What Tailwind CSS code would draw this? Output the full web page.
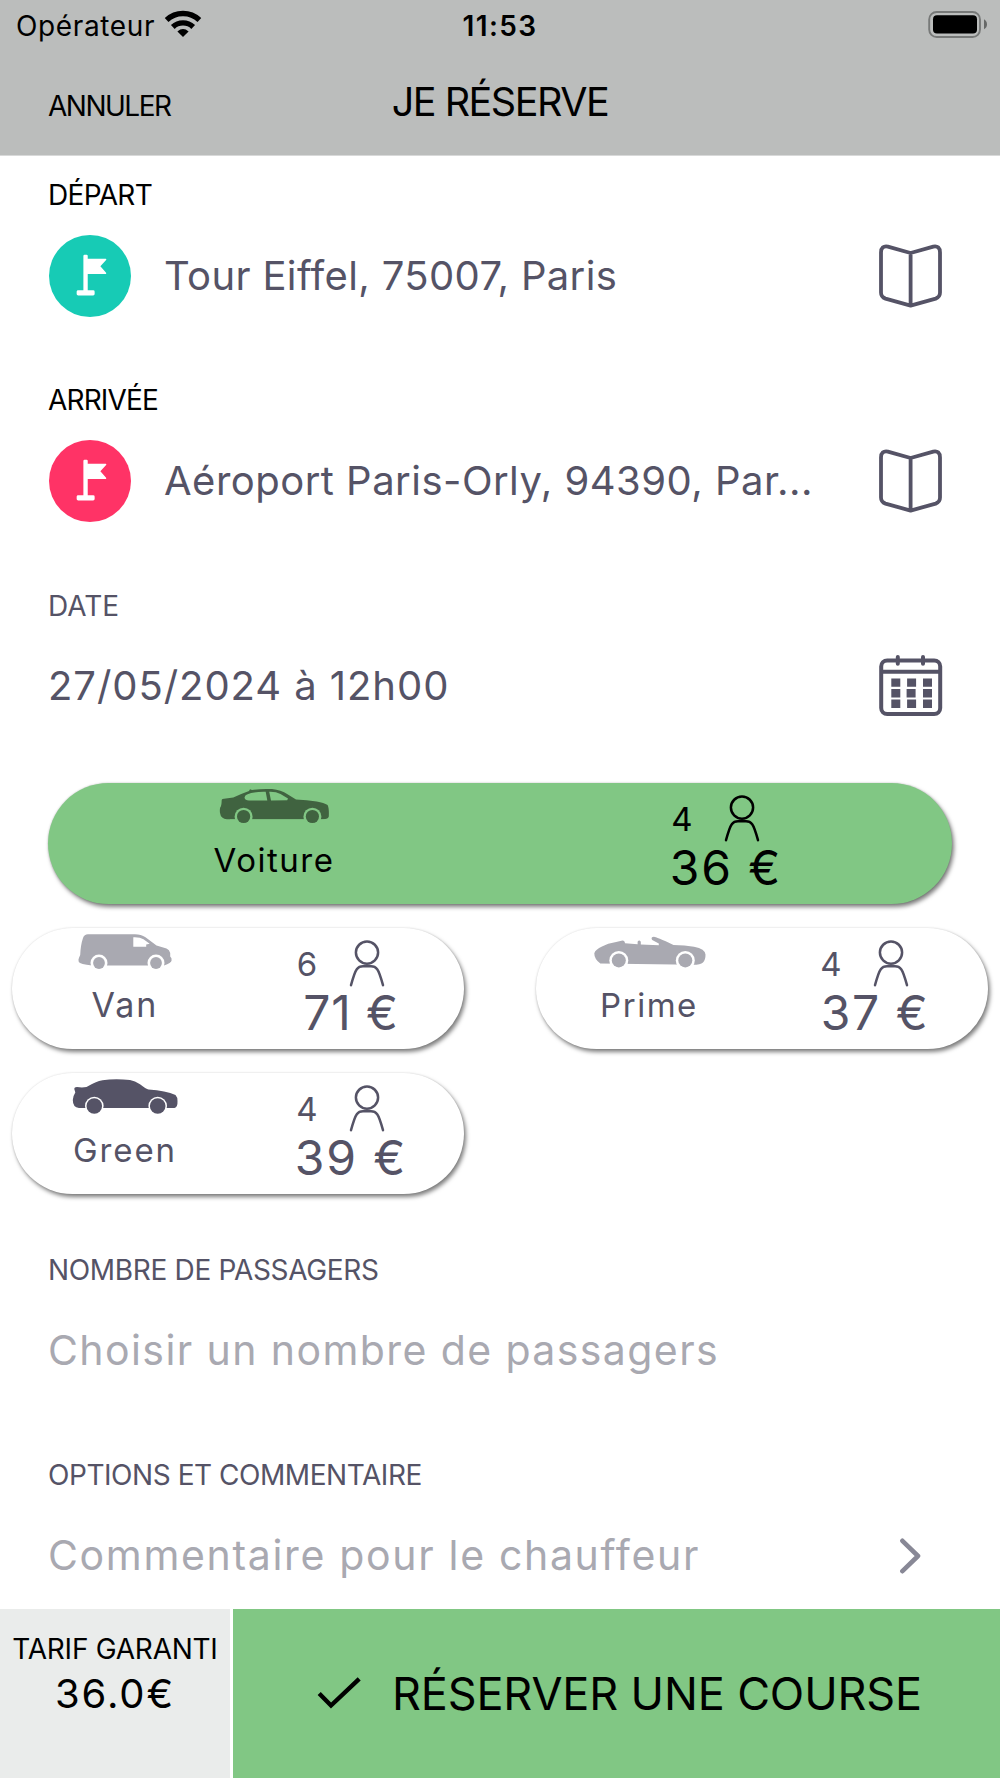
<!DOCTYPE html>
<html lang="fr">
<head>
<meta charset="utf-8">
<title>Je réserve</title>
<script src="https://cdn.jsdelivr.net/npm/@tailwindcss/browser@4"></script>
</head>
<body class="bg-white">
<svg class="hidden">
  <symbol id="flag" viewBox="0 0 83 83">
    <rect x="34.8" y="20" width="4.4" height="38" rx="1.2"/>
    <rect x="28" y="56" width="18.2" height="5.2" rx="1.5"/>
    <path d="M38.5 24H57.4Q58.6 24.2 57.8 25.2L52 31.6L57.8 38.2Q58.4 39.3 57.4 39.4H38.5Z"/>
  </symbol>
  <symbol id="book" viewBox="0 0 64 64">
    <path d="M31.6 9L8.9 2.6Q2 1.4 2 8.5V48.5Q2 53 6.5 54.6L31.6 61.6L56.7 54.6Q61 53 61 48.5V8.5Q61 1.4 54.3 2.6ZM31.6 9V61" fill="none" stroke="currentColor" stroke-width="3.8" stroke-linejoin="round"/>
  </symbol>
  <symbol id="person" viewBox="0 0 36 48">
    <g fill="none" stroke="currentColor" stroke-width="2.5" stroke-linecap="round">
      <circle cx="18" cy="13.6" r="11.1"/>
      <path d="M2 46.2C4.6 36.6 6 32.6 7.8 30.2Q10 27.3 14 27.3H22Q26 27.3 28.2 30.2C30 32.6 31.4 36.6 34 46.2"/>
    </g>
  </symbol>
</svg>

<div class="flex h-[1778px] w-[1000px] flex-col overflow-hidden bg-white font-['Inter',sans-serif] text-[#555366]">

  <header class="h-[156px] shrink-0 border-b border-[#d8d9d9] bg-[#bbbdbc] text-black">
    <div class="grid h-[52px] grid-cols-3 items-start text-[28px] leading-[52px]">
      <div class="flex pl-4">
        <span class="w-[139px] tracking-[0.64px]">Opérateur</span>
        <svg class="ml-[9px] mt-[9px] h-[29px] w-[38px]" viewBox="0 0 38 29" fill="none" stroke="#000" stroke-width="5.4">
          <path d="M2.6 11A24 24 0 0 1 35.4 11M8.8 18A14.8 14.8 0 0 1 29.2 18"/>
          <path d="M19 28L13.4 22.4Q19 17.6 24.6 22.4Z" fill="#000" stroke="none"/>
        </svg>
      </div>
      <span class="text-center font-semibold tracking-[1.4px]">11:53</span>
      <svg class="mt-[10px] mr-[12px] h-[29px] w-[61px] justify-self-end" viewBox="0 0 61 29">
        <rect x="2.2" y="2" width="50.8" height="25" rx="7.5" fill="none" stroke="#777978" stroke-width="1.9"/>
        <rect x="6" y="5.2" width="44" height="18.2" rx="4" fill="#000"/>
        <path d="M57 9.2Q60 11 60 14.3T57 19.3Z" fill="#666867"/>
      </svg>
    </div>
    <div class="grid grid-cols-[300px_400px_300px] items-start">
      <span class="pl-12 text-[28px] leading-[109px] tracking-[-1.5px]">ANNULER</span>
      <span class="text-center text-[39.5px] leading-[101px] tracking-[-1.5px]">JE RÉSERVE</span>
    </div>
  </header>

  <main class="h-[1453px] shrink-0 overflow-hidden">
    <section class="h-[204px] pt-[19px] pl-12">
      <div class="text-[28px] leading-[40px] tracking-[-0.7px] text-black">DÉPART</div>
      <div class="mt-[19px] flex h-[83px] items-center pr-[57px]">
        <svg class="ml-px size-[82px] rounded-full bg-[#17cbb5] fill-white"><use href="#flag"/></svg>
        <span class="ml-[33px] flex-1 text-[40px] leading-none tracking-[0.36px] whitespace-nowrap">Tour Eiffel, 75007, Paris</span>
        <svg class="size-16"><use href="#book"/></svg>
      </div>
    </section>

    <section class="h-[206px] pt-[20px] pl-12">
      <div class="text-[28px] leading-[40px] tracking-[-0.85px] text-black">ARRIVÉE</div>
      <div class="mt-[19px] flex h-[83px] items-center pr-[57px]">
        <svg class="ml-px size-[82px] rounded-full bg-[#ff3366] fill-white"><use href="#flag"/></svg>
        <span class="ml-[33px] flex-1 text-[40px] leading-none tracking-[0.48px] whitespace-nowrap">Aéroport Paris-Orly, 94390, Par...</span>
        <svg class="size-16"><use href="#book"/></svg>
      </div>
    </section>

    <section class="h-[205px] pt-[20px] pl-12">
      <div class="text-[28px] leading-[40px]">DATE</div>
      <div class="mt-[18px] flex h-[83px] items-center pr-[57px]">
        <span class="flex-1 text-[40px] leading-none tracking-[0.94px]">27/05/2024 à 12h00</span>
        <svg class="size-16" viewBox="0 0 64 64" fill="none" stroke="currentColor" stroke-width="4">
          <rect x="2.2" y="6.5" width="59" height="53.5" rx="6"/>
          <path d="M2 17.8H61"/>
          <path d="M18.8 3V9.8M44 3V9.8" stroke-linecap="round"/>
          <path d="M12.3 28.6h9m6.8 0h9m6.9 0h9M12.3 39.2h9m6.3 0h9m7.4 0h9M12.3 49.8h9m6.8 0h9m6.9 0h9" stroke-width="8.4"/>
        </svg>
      </div>
    </section>

    <div class="mt-3 grid grid-cols-[452px_452px] gap-x-[72px] gap-y-6 px-3">
      <div class="col-span-2 mx-9 grid h-[121px] grid-cols-2 rounded-full bg-[#81c784] text-black shadow-[2px_3px_4px_rgba(0,0,0,0.5),0_0_2px_rgba(0,0,0,0.2)]">
        <div class="flex flex-col items-center">
          <svg class="h-[54px] w-[120px]" viewBox="0 0 120 54" fill="#406340">
            <path d="M7.7 17Q8 15.8 10 15.8L19.3 14.5Q28 10.5 35 8L36 6.3L38 7Q47 5.6 58 6.1Q67 7 73.5 11.2L82 16.4Q93 17 102.7 18.6Q110 20 113.6 22Q115.2 25 114.8 33.5Q114.5 36 109 36.3H13Q6.8 35.6 6.3 31Q5.4 28 6.2 24.5Q7.6 23 7.7 17Z"/>
            <path d="M30.6 15Q30.3 12.5 33 11.4Q40 8.5 51.7 8.8L53.3 17.4H35Q31 17.2 30.6 15ZM55.2 8.8Q62 8.6 66.5 11L74 15.4L73.2 17.3L57 17.6Z" fill="#81c784"/>
            <g fill="#81c784"><circle cx="29.6" cy="33.7" r="9"/><circle cx="98.4" cy="33.7" r="9"/><rect x="16" y="36.5" width="98" height="10"/></g>
            <circle cx="29.6" cy="33.5" r="6.6"/><circle cx="98.4" cy="33.5" r="6.6"/>
          </svg>
          <span class="text-[33px] leading-[46px] tracking-[1.5px]">Voiture</span>
        </div>
        <div class="flex flex-col items-center pt-[11px]">
          <div class="flex h-12 gap-[31px] pr-[21px]">
            <span class="w-[22px] text-center text-[33px] leading-[51px]">4</span>
            <svg class="h-12 w-9"><use href="#person"/></svg>
          </div>
          <span class="text-[48px] leading-[51px] tracking-[1.9px]">36 €</span>
        </div>
      </div>

      <div class="grid h-[121px] grid-cols-2 rounded-full bg-white shadow-[2px_3px_4px_rgba(0,0,0,0.5),0_0_2px_rgba(0,0,0,0.12)]">
        <div class="flex flex-col items-center">
          <svg class="h-[54px] w-[120px]" viewBox="0 0 120 54" fill="#a9a9b1">
            <path d="M18 10Q19.3 6.3 23 6.3H70Q76 6.3 80.5 9.3L91.5 17.6L101.5 20.6Q104.5 21.8 105.2 25V28.5Q107 30 106.6 32.5Q106.3 35 99 37.5H27Q15 36.4 13.8 34Q13 31.5 14 29.8L15.2 27Q15.6 17 18 10Z"/>
            <path d="M68.3 9.3Q75 9 78.5 11.3L84.7 15.8L81.2 16.6V18.7H68.3Z" fill="#fff"/>
            <g fill="#fff"><circle cx="34" cy="35" r="8.5"/><circle cx="91" cy="35" r="8.5"/></g>
            <circle cx="34" cy="35" r="5.9"/><circle cx="91" cy="35" r="5.9"/>
          </svg>
          <span class="text-[34px] leading-[46px] tracking-[2px]">Van</span>
        </div>
        <div class="flex flex-col items-center pt-[11px]">
          <div class="flex h-12 gap-[31px] pr-[21px]">
            <span class="w-[22px] text-center text-[33px] leading-[51px]">6</span>
            <svg class="h-12 w-9"><use href="#person"/></svg>
          </div>
          <span class="text-[48px] leading-[51px] tracking-[0.8px]">71 €</span>
        </div>
      </div>

      <div class="grid h-[121px] grid-cols-2 rounded-full bg-white shadow-[2px_3px_4px_rgba(0,0,0,0.5),0_0_2px_rgba(0,0,0,0.12)]">
        <div class="flex flex-col items-center">
          <svg class="h-[54px] w-[120px]" viewBox="0 0 120 54" fill="#a9a9b1">
            <path d="M5.3 25.3Q6.5 21.5 13 18.6Q19 15.2 26 14.2L33.5 12.4Q35.8 12.4 36 15.3L48.6 16.2V13.8Q50.2 11.2 51.8 13.8V16.5L69.8 17.3V15.4L63.2 12Q61.3 9 65 8.7Q67 8.7 84.5 16.9Q96 17.2 105 18.7Q116.3 21 116.5 26.5Q116.6 32 114 34.5Q111.5 36.8 104 36.8L11.3 35.6Q5.2 31 5.3 25.3Z"/>
            <g fill="#fff"><circle cx="29.8" cy="32.4" r="9.5"/><circle cx="96.3" cy="32.4" r="9.5"/></g>
            <circle cx="29.8" cy="32.4" r="7"/><circle cx="96.3" cy="32.4" r="7"/>
          </svg>
          <span class="text-[33px] leading-[46px] tracking-[1.52px]">Prime</span>
        </div>
        <div class="flex flex-col items-center pt-[11px]">
          <div class="flex h-12 gap-[31px] pr-[21px]">
            <span class="w-[22px] text-center text-[33px] leading-[51px]">4</span>
            <svg class="h-12 w-9"><use href="#person"/></svg>
          </div>
          <span class="text-[48px] leading-[51px] tracking-[1.5px]">37 €</span>
        </div>
      </div>

      <div class="grid h-[121px] grid-cols-2 rounded-full bg-white shadow-[2px_3px_4px_rgba(0,0,0,0.5),0_0_2px_rgba(0,0,0,0.12)]">
        <div class="flex flex-col items-center">
          <svg class="h-[54px] w-[120px]" viewBox="0 0 120 54" fill="#555366">
            <path d="M9.3 16Q9.2 14 12 14Q17 14.8 21.5 14Q31 8.2 37.5 7.2Q50 5.6 65 7Q70 8 75 11.3Q81 16 83.5 16.4Q101 17.5 110.5 22Q112.8 24.5 112.5 28Q112.8 34 109.5 35H14Q7.8 34.5 7.8 27Q8 23 10.3 19.5Z"/>
            <g fill="#fff"><circle cx="29.3" cy="33" r="9.3"/><circle cx="92.7" cy="33" r="9.3"/></g>
            <circle cx="29.3" cy="33" r="7.8"/><circle cx="92.7" cy="33" r="7.8"/>
          </svg>
          <span class="text-[33px] leading-[46px] tracking-[1.9px]">Green</span>
        </div>
        <div class="flex flex-col items-center pt-[11px]">
          <div class="flex h-12 gap-[31px] pr-[21px]">
            <span class="w-[22px] text-center text-[33px] leading-[51px]">4</span>
            <svg class="h-12 w-9"><use href="#person"/></svg>
          </div>
          <span class="text-[48px] leading-[51px] tracking-[1.9px]">39 €</span>
        </div>
      </div>
    </div>

    <section class="mt-9 h-[205px] pt-[20px] pl-12">
      <div class="text-[28px] leading-[40px] tracking-[-0.33px]">NOMBRE DE PASSAGERS</div>
      <div class="mt-[19px] flex h-[83px] items-center">
        <span class="text-[41px] leading-none tracking-[1.41px] text-[#a9a9b1]">Choisir un nombre de passagers</span>
      </div>
    </section>

    <section class="h-[205px] pt-[20px] pl-12">
      <div class="text-[28px] leading-[40px] tracking-[-0.45px]">OPTIONS ET COMMENTAIRE</div>
      <div class="mt-[19px] flex h-[83px] items-center pr-[78px]">
        <span class="flex-1 text-[41px] leading-none tracking-[1.67px] text-[#a9a9b1]">Commentaire pour le chauffeur</span>
        <svg class="h-9 w-6" viewBox="0 0 24 36" fill="none" stroke="#888896" stroke-width="4.6" stroke-linecap="round" stroke-linejoin="round"><path d="M4.4 2.8L20 18L4.4 33.2"/></svg>
      </div>
    </section>
  </main>

  <footer class="flex h-[169px] shrink-0 gap-[3px] text-black">
    <div class="flex w-[230px] flex-col items-center bg-[#eaeceb] pt-5">
      <span class="text-[28px] leading-[40px] tracking-[-0.25px] whitespace-nowrap">TARIF GARANTI</span>
      <span class="text-[40px] leading-[49px] tracking-[1.9px]">36.0€</span>
    </div>
    <div class="flex flex-1 items-center bg-[#81c784] pl-[84px]">
      <svg class="h-9 w-[46px]" viewBox="0 0 46 36" fill="none" stroke="#000" stroke-width="4.4"><path d="M2.2 17.5L14 29.5L42.2 2.8"/></svg>
      <span class="ml-[29px] text-[45px] leading-none tracking-[-0.14px] whitespace-nowrap">RÉSERVER UNE COURSE</span>
    </div>
  </footer>
</div>
</body>
</html>
